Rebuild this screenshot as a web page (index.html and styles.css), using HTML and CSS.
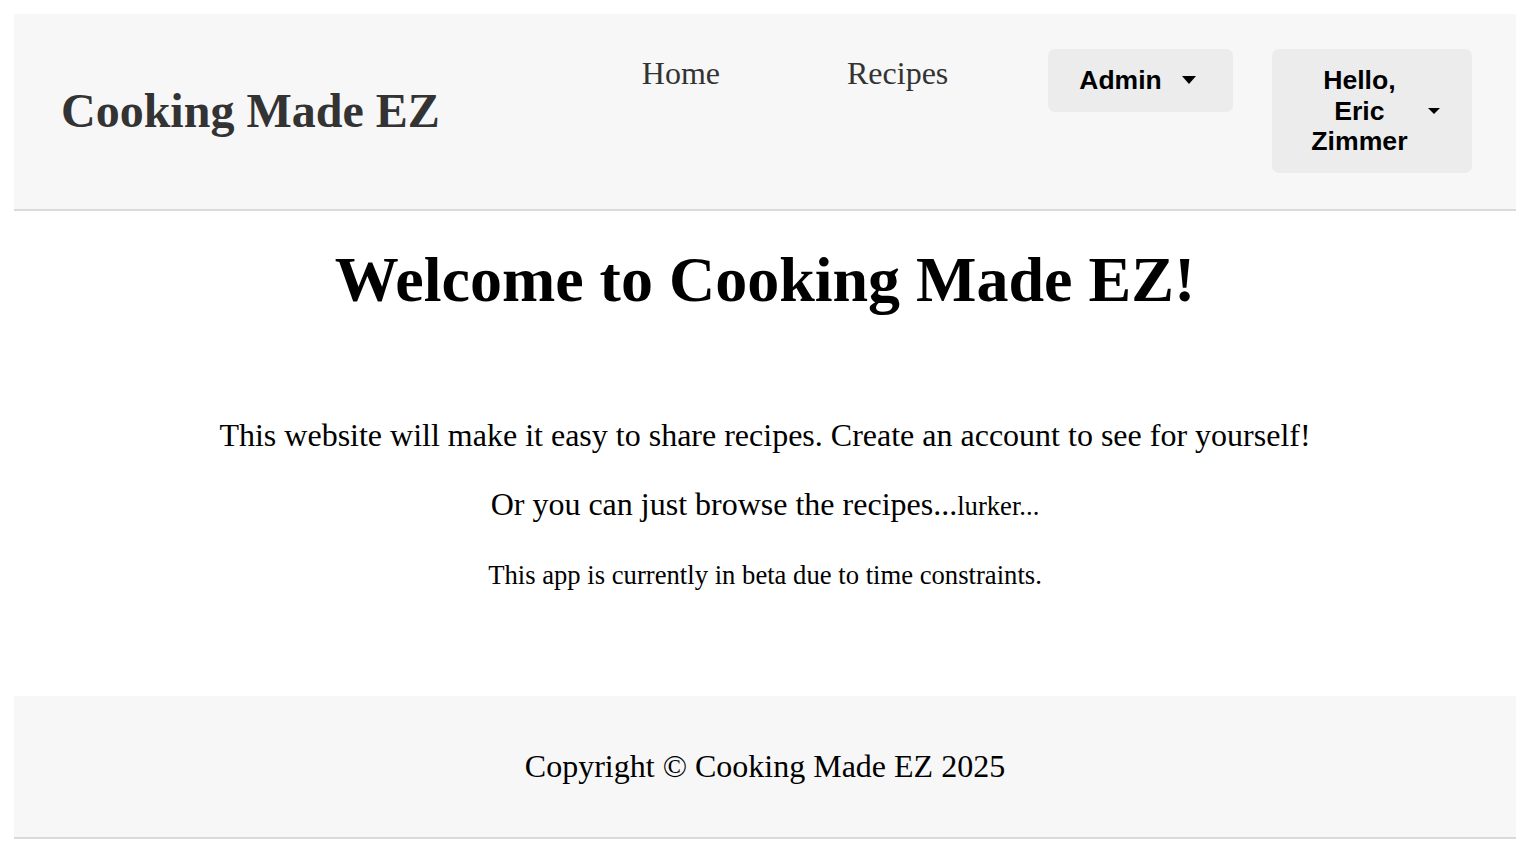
FILE: index.html
```html
<!DOCTYPE html>
<html lang="en">
<head>
<meta charset="utf-8">
<title>Cooking Made EZ</title>
<link rel="stylesheet" href="styles.css">
</head>
<body>
<div class="page">
  <header class="site-header">
    <div class="brand">Cooking Made EZ</div>
    <nav class="nav">
      <a class="nav-link nav-home" href="#">Home</a>
      <a class="nav-link nav-recipes" href="#">Recipes</a>
      <button class="drop-btn admin-btn" type="button">
        <span class="btn-label">Admin</span>
        <span class="caret caret-lg"></span>
      </button>
      <button class="drop-btn user-btn" type="button">
        <span class="btn-label user-label">Hello, Eric Zimmer</span>
        <span class="caret caret-sm"></span>
      </button>
    </nav>
  </header>

  <main class="main">
    <h1 class="welcome">Welcome to Cooking Made EZ!</h1>
    <p class="lead">This website will make it easy to share recipes. Create an account to see for yourself!</p>
    <p class="lead lead-second">Or you can just browse the recipes...<small class="aside">lurker...</small></p>
    <p class="note">This app is currently in beta due to time constraints.</p>
  </main>

  <footer class="site-footer">
    <p class="copyright">Copyright © Cooking Made EZ 2025</p>
  </footer>
</div>
</body>
</html>
```

FILE: styles.css
```css
html, body {
  margin: 0;
  padding: 0;
  background: #ffffff;
}

body {
  font-family: "Liberation Serif", "Times New Roman", serif;
  color: #000;
}

.page {
  padding: 14px 12px 7px 14px;
}

/* Header */
.site-header {
  display: flex;
  align-items: center;
  justify-content: space-between;
  background: #f7f7f7;
  border-bottom: 2px solid #dadada;
  padding: 35px 44px 36px 47px;
}

.brand {
  font-size: 48px;
  line-height: 55px;
  font-weight: bold;
  color: #333;
}

.nav {
  display: flex;
  align-items: flex-start;
}

.nav-link {
  font-size: 32px;
  line-height: 37px;
  color: #333;
  text-decoration: none;
  padding-top: 6px;
}

.nav-home {
  margin-right: 127px;
}

.nav-recipes {
  margin-right: 100px;
}

.drop-btn {
  display: flex;
  align-items: center;
  border: none;
  border-radius: 7px;
  background: #ececec;
  color: #000;
  font-family: "Liberation Sans", Arial, sans-serif;
  font-weight: bold;
  font-size: 26.5px;
  line-height: 30.5px;
  padding: 16px 32px;
  margin: 0;
  cursor: pointer;
}

.admin-btn {
  margin-right: 39px;
  padding-left: 31px;
  padding-right: 37px;
}

.admin-btn .caret {
  margin-left: 20.5px;
}

.user-btn {
  padding-right: 32.4px;
}

.user-label {
  display: block;
  width: 110.4px;
  text-align: center;
  font-size: 26.67px;
}

.user-btn .caret {
  margin-left: 13px;
}

.caret {
  display: block;
  width: 0;
  height: 0;
  border-style: solid;
  border-color: #000 transparent transparent transparent;
}

.caret-lg {
  border-width: 8px 7.5px 0 7.5px;
}

.caret-sm {
  border-width: 6px 6px 0 6px;
}

/* Main */
.main {
  display: flex;
  flex-direction: column;
  align-items: center;
  text-align: center;
  padding: 32px 0 105px;
}

.welcome {
  margin: 0 0 100px;
  font-size: 64px;
  line-height: 74px;
  font-weight: bold;
}

.lead {
  margin: 0;
  font-size: 32px;
  line-height: 37px;
}

.lead-second {
  margin-top: 32px;
}

.aside {
  font-size: 26.67px;
}

.note {
  margin: 35px 0 0;
  font-size: 26.67px;
  line-height: 31px;
}

/* Footer */
.site-footer {
  background: #f7f7f7;
  border-bottom: 2px solid #dadada;
  padding: 52px 0;
  text-align: center;
}

.copyright {
  margin: 0;
  font-size: 32px;
  line-height: 37px;
}
```
